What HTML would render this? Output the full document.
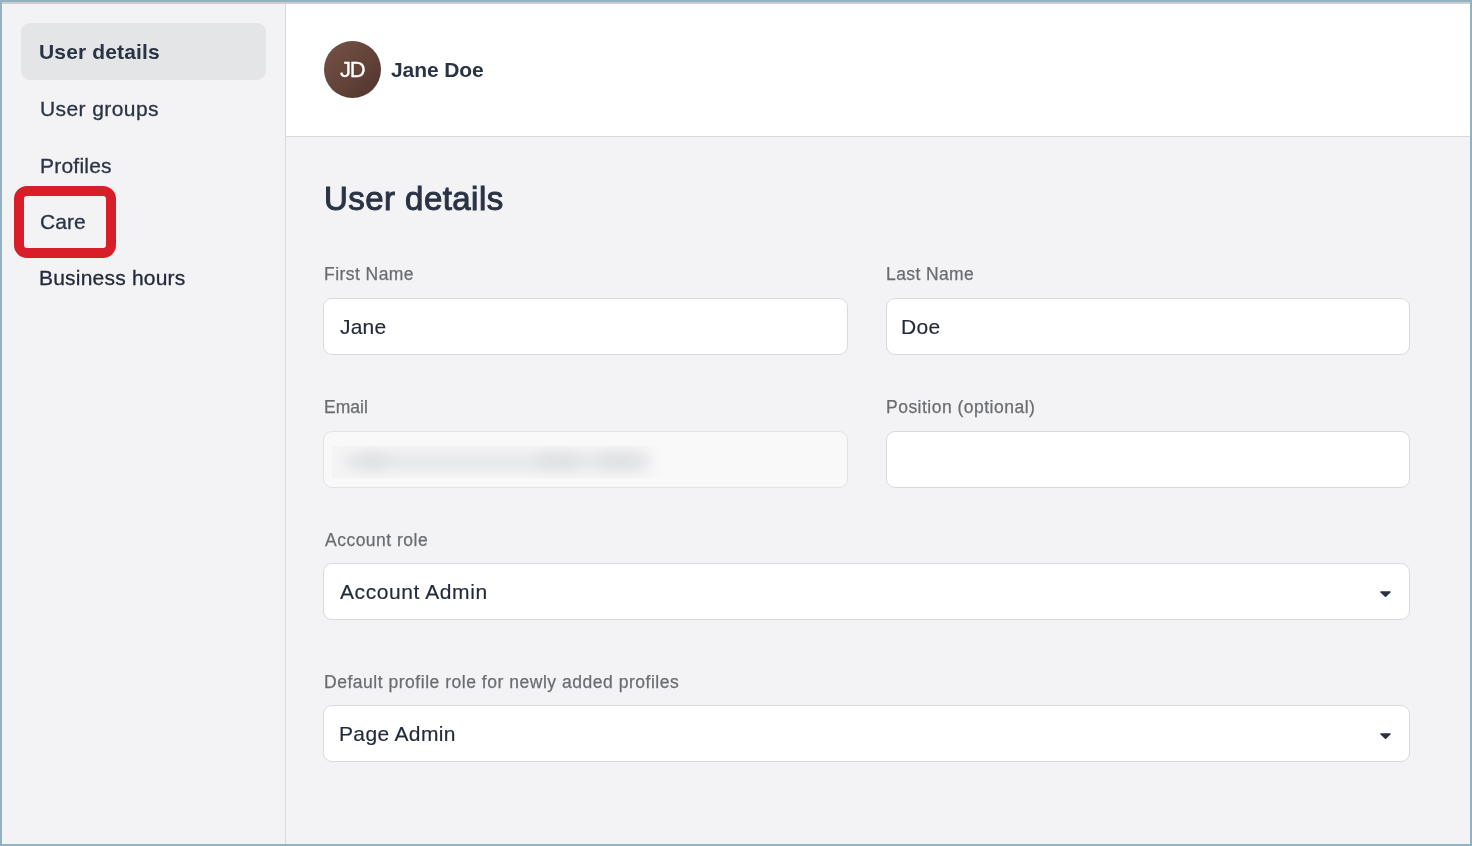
<!DOCTYPE html>
<html lang="en">
<head>
<meta charset="utf-8">
<title>User details</title>
<style>
*{box-sizing:border-box;margin:0;padding:0}
html,body{width:1472px;height:846px;overflow:hidden;background:#f3f3f5}
body{position:relative;font-family:"Liberation Sans",sans-serif;color:#2a3344}
.abs{position:absolute}
.t{white-space:nowrap;will-change:transform}
#frame{left:0;top:0;width:1472px;height:846px;border:2px solid #93b2c1;z-index:50;pointer-events:none}
#topbar{left:2px;top:2px;width:1468px;height:2px;background:#cdcdcd;z-index:40}
#side{left:2px;top:4px;width:283px;height:840px;background:#f3f3f5}
#sideline{left:285px;top:4px;width:1px;height:840px;background:#d9dadd}
#sel{left:21px;top:23px;width:245px;height:57px;background:#e4e5e7;border-radius:9px}
#header{left:286px;top:4px;width:1184px;height:132px;background:#fff}
#hline{left:286px;top:136px;width:1184px;height:1px;background:#d9dadd}
#avatar{left:324px;top:41px;width:57px;height:57px;border-radius:50%;background:linear-gradient(135deg,#755246 0%,#64443a 50%,#51332d 100%)}
.inp{height:57px;background:#fff;border:1px solid #d9dade;border-radius:9px}
.dis{background:#f9f9fa;border-color:#e2e3e6}
.caret{width:11px;height:6px}
#red{left:14px;top:186px;width:102px;height:72px;border:10px solid #d81e29;border-radius:13px}
#blurbox{left:332px;top:446px;width:330px;height:32px;background:linear-gradient(90deg,#f4f4f5 0,#f4f4f5 93%,#f8f8f9 100%);overflow:hidden}
#blur{left:12px;top:7px;width:306px;height:17px;background:#e7e8ea;filter:blur(5px);border-radius:9px}
.blob{height:14px;top:8px;background:#e0e1e3;filter:blur(6px);border-radius:7px}
</style>
</head>
<body>
<div class="abs" id="side"></div>
<div class="abs" id="sideline"></div>
<div class="abs" id="sel"></div>
<div class="abs" id="red"></div>

<div class="abs" id="header"></div>
<div class="abs" id="hline"></div>
<div class="abs" id="avatar"></div>

<div class="abs inp" style="left:323px;top:298px;width:525px"></div>
<div class="abs inp" style="left:886px;top:298px;width:524px"></div>
<div class="abs inp dis" style="left:323px;top:431px;width:525px"></div>
<div class="abs" id="blurbox"><div class="abs" id="blur"></div><div class="abs blob" style="left:28px;width:26px"></div><div class="abs blob" style="left:206px;width:40px"></div><div class="abs blob" style="left:268px;width:38px"></div></div>
<div class="abs inp" style="left:886px;top:431px;width:524px"></div>
<div class="abs inp" style="left:323px;top:563px;width:1087px"></div>
<svg class="abs caret" style="left:1380px;top:590.5px" viewBox="0 0 11 6"><path d="M1 1 L10 1 L5.5 5.2 Z" fill="#2b3242" stroke="#2b3242" stroke-width="1.6" stroke-linejoin="round"/></svg>
<div class="abs inp" style="left:323px;top:705px;width:1087px"></div>
<svg class="abs caret" style="left:1380px;top:732.5px" viewBox="0 0 11 6"><path d="M1 1 L10 1 L5.5 5.2 Z" fill="#2b3242" stroke="#2b3242" stroke-width="1.6" stroke-linejoin="round"/></svg>

<div class="abs t" id="nav1" style="left:39.4px;top:31.72px;font-size:21px;line-height:40px;letter-spacing:0.146px;color:#2a3344;font-weight:bold;">User details</div>
<div class="abs t" id="nav2" style="left:39.7px;top:89.42px;font-size:21px;line-height:40px;letter-spacing:0.408px;color:#2a3344;-webkit-text-stroke:0.3px #2a3344;">User groups</div>
<div class="abs t" id="nav3" style="left:39.5px;top:146.42px;font-size:21px;line-height:40px;letter-spacing:0.221px;color:#2a3344;-webkit-text-stroke:0.3px #2a3344;">Profiles</div>
<div class="abs t" id="nav4" style="left:40.0px;top:202.22px;font-size:21px;line-height:40px;letter-spacing:0.028px;color:#2a3344;-webkit-text-stroke:0.3px #2a3344;">Care</div>
<div class="abs t" id="nav5" style="left:39.2px;top:257.72px;font-size:21px;line-height:40px;letter-spacing:0.210px;color:#222a3a;-webkit-text-stroke:0.3px #222a3a;">Business hours</div>
<div class="abs t" id="jd" style="left:339.9px;top:50.28px;font-size:22px;line-height:40px;letter-spacing:-1.160px;color:#ffffff;-webkit-text-stroke:0.3px #ffffff;">JD</div>
<div class="abs t" id="name" style="left:391.1px;top:49.62px;font-size:21px;line-height:40px;letter-spacing:-0.100px;color:#2a3344;font-weight:bold;">Jane Doe</div>
<div class="abs t" id="h1" style="left:324.3px;top:179.07px;font-size:33px;line-height:40px;letter-spacing:0.450px;color:#2a3344;-webkit-text-stroke:1.0px #2a3344;">User details</div>
<div class="abs t" id="fn" style="left:323.7px;top:254.04px;font-size:17.5px;line-height:40px;letter-spacing:0.444px;color:#696c71;-webkit-text-stroke:0.25px #696c71;">First Name</div>
<div class="abs t" id="ln" style="left:885.5px;top:254.04px;font-size:17.5px;line-height:40px;letter-spacing:0.399px;color:#696c71;-webkit-text-stroke:0.25px #696c71;">Last Name</div>
<div class="abs t" id="jane" style="left:339.6px;top:306.72px;font-size:21px;line-height:40px;letter-spacing:0.200px;color:#222a3a;-webkit-text-stroke:0.15px #222a3a;">Jane</div>
<div class="abs t" id="doe" style="left:901.2px;top:306.72px;font-size:21px;line-height:40px;letter-spacing:0.360px;color:#222a3a;-webkit-text-stroke:0.15px #222a3a;">Doe</div>
<div class="abs t" id="email" style="left:323.5px;top:386.94px;font-size:17.5px;line-height:40px;letter-spacing:0.010px;color:#696c71;-webkit-text-stroke:0.25px #696c71;">Email</div>
<div class="abs t" id="pos" style="left:885.5px;top:386.94px;font-size:17.5px;line-height:40px;letter-spacing:0.488px;color:#696c71;-webkit-text-stroke:0.25px #696c71;">Position (optional)</div>
<div class="abs t" id="ar" style="left:324.7px;top:519.84px;font-size:17.5px;line-height:40px;letter-spacing:0.486px;color:#696c71;-webkit-text-stroke:0.25px #696c71;">Account role</div>
<div class="abs t" id="aa" style="left:339.6px;top:571.62px;font-size:21px;line-height:40px;letter-spacing:0.586px;color:#222a3a;-webkit-text-stroke:0.15px #222a3a;">Account Admin</div>
<div class="abs t" id="def" style="left:323.8px;top:662.04px;font-size:17.5px;line-height:40px;letter-spacing:0.523px;color:#696c71;-webkit-text-stroke:0.25px #696c71;">Default profile role for newly added profiles</div>
<div class="abs t" id="pa" style="left:338.5px;top:713.82px;font-size:21px;line-height:40px;letter-spacing:0.354px;color:#222a3a;-webkit-text-stroke:0.15px #222a3a;">Page Admin</div>

<div class="abs" id="topbar"></div>
<div class="abs" id="frame"></div>
</body>
</html>
